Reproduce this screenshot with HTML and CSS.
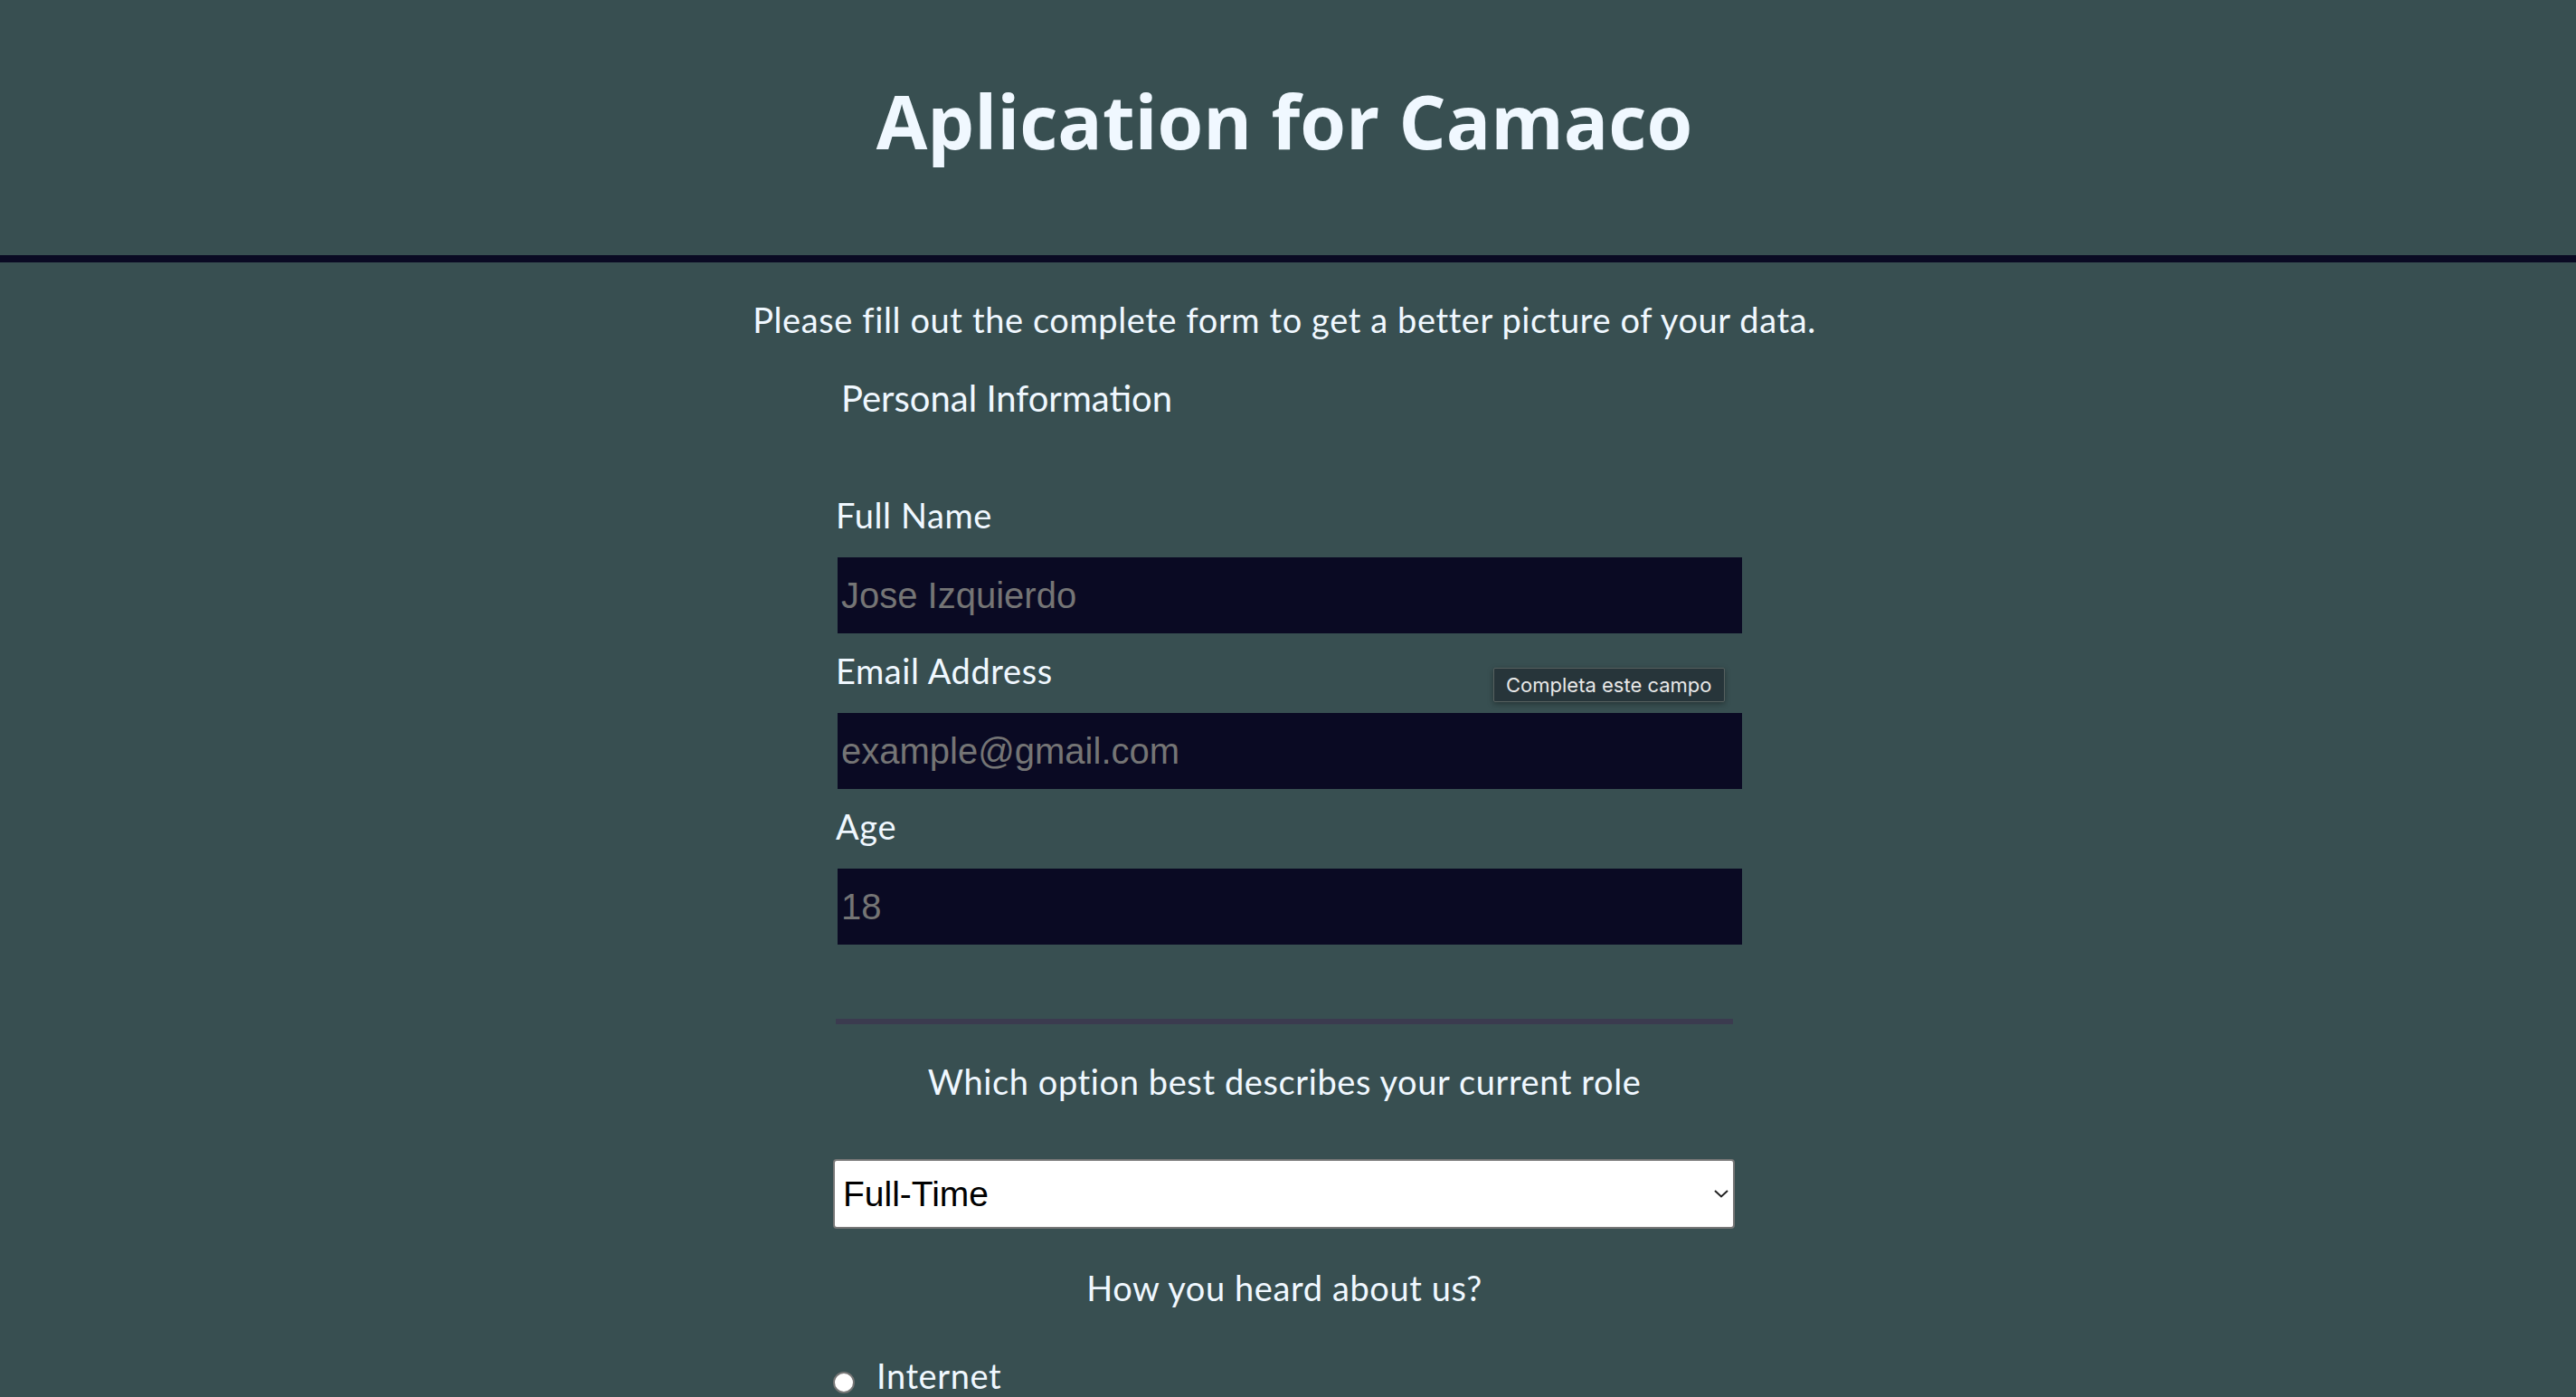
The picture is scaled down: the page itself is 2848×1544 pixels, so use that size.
FILE: index.html
```html
<!DOCTYPE html>
<html lang="en">
<head>
<meta charset="utf-8">
<title>Aplication for Camaco</title>
<link rel="stylesheet" href="styles.css">
</head>
<body>
  <header class="header">
    <h1 class="title">Aplication for Camaco</h1>
  </header>
  <main class="main">
    <p class="description">Please fill out the complete form to get a better picture of your data.</p>
    <form class="form">
      <div class="legend">Personal Information</div>
      <div class="field field-first">
        <label class="label" for="name">Full Name</label>
        <input class="text-input" id="name" type="text" placeholder="Jose Izquierdo">
      </div>
      <div class="field">
        <label class="label" for="email">Email Address</label>
        <input class="text-input" id="email" type="email" placeholder="example@gmail.com">
        <div class="tooltip">Completa este campo</div>
      </div>
      <div class="field">
        <label class="label" for="age">Age</label>
        <input class="text-input" id="age" type="number" placeholder="18">
      </div>
      <hr class="divider">
      <p class="question">Which option best describes your current role</p>
      <div class="select-wrap">
        <select class="select">
          <option>Full-Time</option>
          <option>Part-Time</option>
          <option>Student</option>
        </select>
        <svg class="chevron" width="16" height="9" viewBox="0 0 16 9"><path d="M1 1 L8 7.5 L15 1" fill="none" stroke="#222" stroke-width="2"/></svg>
      </div>
      <p class="question question-heard">How you heard about us?</p>
      <label class="radio-row">
        <input class="radio" type="radio" name="heard">
        <span class="radio-text">Internet</span>
      </label>
    </form>
  </main>
</body>
</html>
```
FILE: styles.css
```css
html {
  background: #384f51;
}
body {
  margin: 0;
  background: #384f51;
  color: #f0f8ff;
  font-family: "Lato", "Open Sans", sans-serif;
  min-height: 100vh;
  overflow: hidden;
}
.header {
  padding: 83px 8px 99px 0;
  border-bottom: 8px solid #0a0a23;
}
.title {
  margin: 0;
  text-align: center;
  font-family: "Open Sans", "DejaVu Sans", sans-serif;
  font-weight: 700;
  font-size: 82px;
  line-height: 100px;
  color: #f0f8ff;
}
.main {
  padding-right: 8px;
}
.description {
  margin: 40px 0 0;
  text-align: center;
  font-size: 38px;
  line-height: 46px;
  letter-spacing: 0.6px;
}
.form {
  width: 1000px;
  margin: 0 auto;
  display: flex;
  flex-direction: column;
}
.legend {
  margin-top: 40px;
  padding-left: 10px;
  font-size: 40px;
  line-height: 48px;
}
.field {
  position: relative;
  display: flex;
  flex-direction: column;
  align-items: flex-start;
  margin-top: 18px;
}
.field-first {
  margin-top: 82px;
}
.label {
  padding-left: 4px;
  font-size: 38px;
  line-height: 46px;
  letter-spacing: 0.6px;
  margin-bottom: 24px;
}
.text-input {
  box-sizing: border-box;
  width: 1000px;
  height: 84px;
  margin: 0 0 0 6px;
  padding: 0 4px;
  border: none;
  background: #0a0a23;
  color: #f0f8ff;
  font-family: "Liberation Sans", Arial, sans-serif;
  font-size: 40px;
  outline: none;
}
.text-input::placeholder {
  color: #757575;
}
.text-input::-webkit-outer-spin-button,
.text-input::-webkit-inner-spin-button {
  -webkit-appearance: none;
  margin: 0;
}
.tooltip {
  position: absolute;
  left: 731px;
  top: 20px;
  box-sizing: border-box;
  height: 38px;
  padding: 0 13px;
  display: flex;
  align-items: center;
  background: #27353a;
  border: 1px solid #56605f;
  border-radius: 2px;
  box-shadow: 0 2px 6px rgba(0, 0, 0, 0.35);
  font-family: "Inter", "Liberation Sans", sans-serif;
  font-size: 22px;
  color: #e8e8e8;
  white-space: nowrap;
}
.divider {
  width: 992px;
  height: 6px;
  margin: 82px 0 0 4px;
  border: none;
  background: #3b3b4f;
}
.question {
  margin: 40px 0 0;
  text-align: center;
  font-size: 38px;
  line-height: 46px;
  letter-spacing: 0.6px;
}
.select-wrap {
  position: relative;
  margin: 63px 0 0 1px;
  width: 997px;
}
.select {
  -webkit-appearance: none;
  appearance: none;
  box-sizing: border-box;
  width: 100%;
  height: 77px;
  padding: 0 40px 0 9px;
  border: 2px solid #767676;
  border-radius: 4px;
  background: #ffffff;
  color: #000000;
  font-family: "Liberation Sans", Arial, sans-serif;
  font-size: 39px;
  outline: none;
}
.chevron {
  position: absolute;
  right: 7px;
  top: 34px;
  pointer-events: none;
}
.question-heard {
  margin-top: 42px;
}
.radio-row {
  display: flex;
  align-items: flex-start;
  margin-top: 51px;
  font-size: 38px;
  line-height: 46px;
  letter-spacing: 0.6px;
}
.radio {
  -webkit-appearance: none;
  appearance: none;
  box-sizing: border-box;
  width: 24px;
  height: 24px;
  margin: 19px 0 0 1px;
  border: 2px solid #767676;
  border-radius: 50%;
  background: #ffffff;
}
.radio-text {
  margin-left: 24px;
}
```
